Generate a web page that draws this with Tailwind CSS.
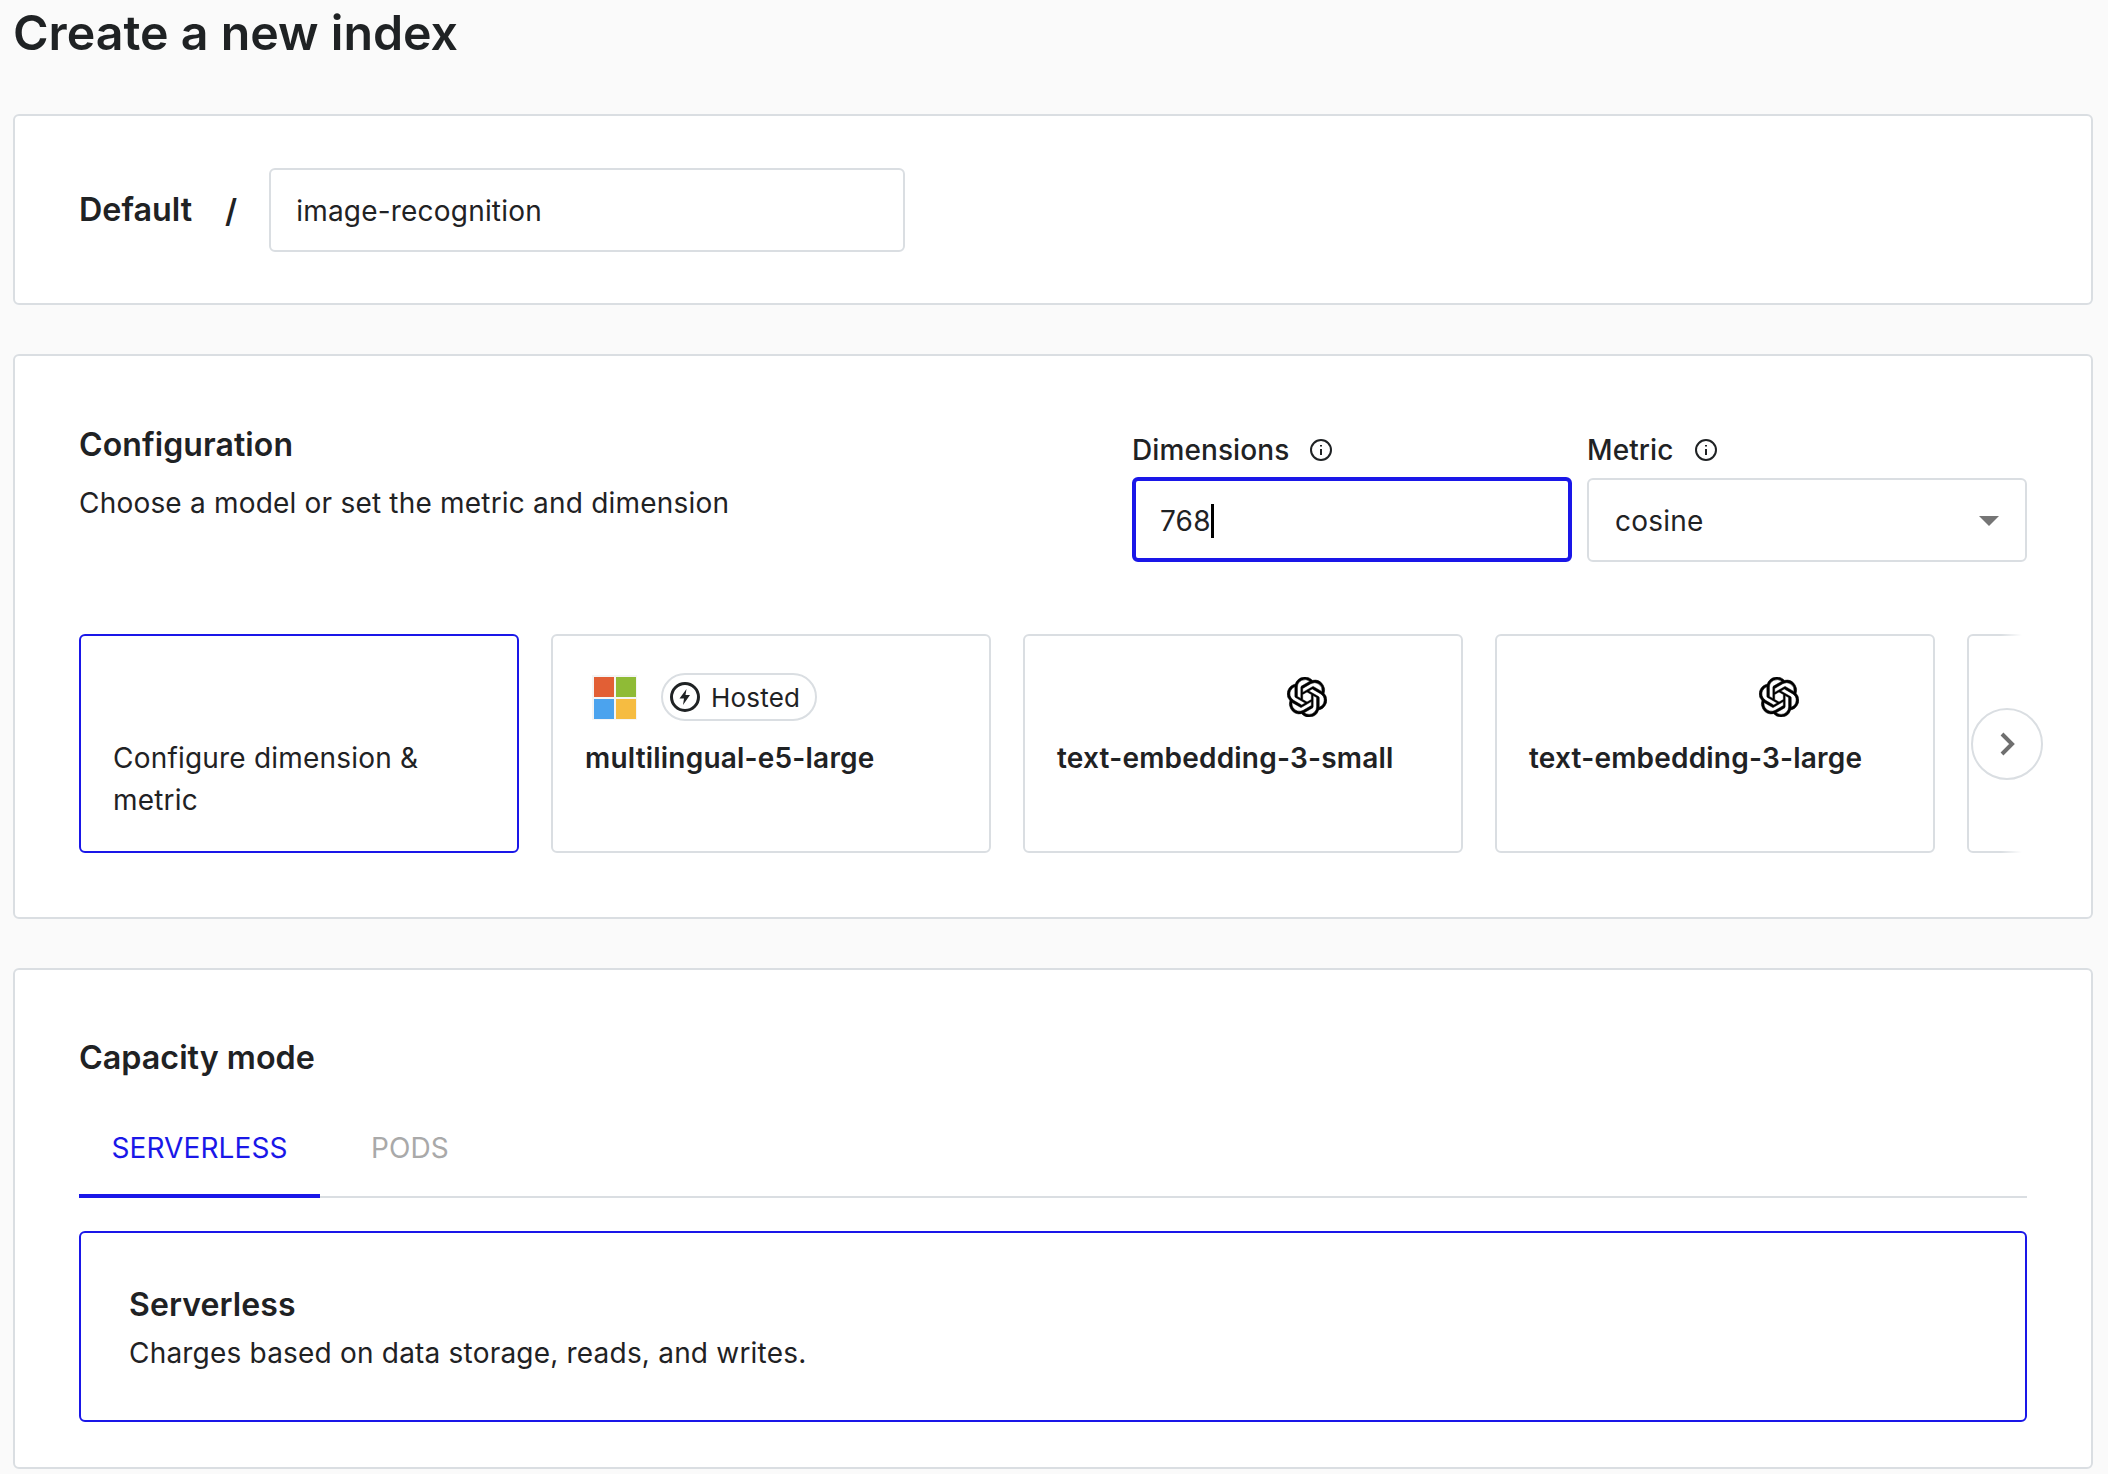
<!doctype html>
<html><head><meta charset="utf-8"><script src="https://cdn.jsdelivr.net/npm/@tailwindcss/browser@4"></script></head>
<body class="bg-[#fafafa] text-[#1f2224] font-['Inter',sans-serif] h-[1474px] overflow-hidden">
<div class="pl-[13px] pr-[15px]">
<h1 class="h-[114px] text-[48.3px] leading-[66px] font-semibold">Create a new index</h1>

<section class="h-[191px] bg-white border-2 border-[#dadee2] rounded-md flex items-center pl-[64px] mb-[49px]">
  <span class="text-[32.3px] font-semibold pt-[2px]">Default</span>
  <span class="text-[32px] font-semibold ml-[33px] mr-[32px] pt-[2px]">/</span>
  <div class="w-[636px] h-[84px] border-2 border-[#dadee2] rounded-md flex items-center pl-[25px] pt-[2px] text-[28px] tracking-[0.2px]">image-recognition</div>
</section>

<section class="h-[565px] bg-white border-2 border-[#dadee2] rounded-md pl-[64px] pr-[64px] flex flex-col mb-[49px]">
  <div class="flex h-[278px]">
    <div class="flex-1 pt-[69px]">
      <h2 class="text-[32px] tracking-[0.1px] leading-[40px] font-semibold">Configuration</h2>
      <p class="text-[28px] tracking-[0.2px] leading-[40px] mt-[18px]">Choose a model or set the metric and dimension</p>
    </div>
    <div class="w-[440px] pt-[74px] mr-[16px]">
      <div class="flex items-center gap-[20px] h-[40px] text-[28px] tracking-[0.1px] font-medium">Dimensions <svg class="w-[24px] h-[24px]" viewBox="0 0 24 24" fill="none" stroke="#1f2224" stroke-width="2"><circle cx="12" cy="12" r="10"/><path d="M12 11v6M12 7v1.500"/></svg></div>
      <div class="mt-[7px] h-[85px] border-[4px] border-[#1a17e8] rounded-md flex items-center pl-[24px] pt-[2px] text-[28px] tracking-[0.2px]">768<span class="w-[3px] h-[34px] bg-black inline-block"></span></div>
    </div>
    <div class="w-[440px] pt-[74px] -ml-[1px]">
      <div class="flex items-center gap-[20px] h-[40px] text-[28px] tracking-[0.1px] font-medium">Metric <svg class="w-[24px] h-[24px]" viewBox="0 0 24 24" fill="none" stroke="#1f2224" stroke-width="2"><circle cx="12" cy="12" r="10"/><path d="M12 11v6M12 7v1.500"/></svg></div>
      <div class="mt-[8px] h-[84px] border-2 border-[#dadee2] rounded-md flex items-center justify-between pl-[26px] pr-[26px] pt-[1px] text-[28px] tracking-[0.2px]">cosine <svg class="w-[20px] h-[10px]" viewBox="0 0 20 10"><path d="M0 0h20L10 10z" fill="#757575"/></svg></div>
    </div>
  </div>
  <div class="relative h-[219px] w-[1948px]">
  <div class="relative flex gap-[32px] overflow-hidden h-[219px]">
    <div class="w-[440px] shrink-0 border-2 border-[#1a17e8] rounded-md pl-[32px] pr-[32px] pt-[101px] text-[28px] tracking-[0.2px] leading-[42px]">Configure dimension &amp; metric</div>
    <div class="w-[440px] shrink-0 border-2 border-[#dadee2] rounded-md pl-[32px] pt-[37px]">
      <div class="flex items-center h-[48px] ml-[7px]">
        <svg class="w-[45px] h-[45px]" viewBox="0 0 45 45"><rect width="45" height="45" fill="#f5f5f5"/><rect x="2" y="2" width="20" height="20" fill="#e25f35"/><rect x="24" y="2" width="20" height="20" fill="#8fbb36"/><rect x="2" y="24" width="20" height="20" fill="#4ba3ee"/><rect x="24" y="24" width="20" height="20" fill="#f6bc41"/></svg>
        <div class="ml-[24px] h-[48px] w-[156px] border-2 border-[#dadee2] rounded-full flex items-center pl-[7px] gap-[11px] text-[26px] tracking-[0.2px]">
          <svg class="w-[30px] h-[30px]" viewBox="0 0 30 30"><circle cx="15" cy="15" r="13.5" fill="none" stroke="#1f2224" stroke-width="3"/><path d="M16.500 7 9.500 16.500H14L13 23l7-10h-4.500z" fill="#1f2224"/></svg>Hosted</div>
      </div>
      <div class="text-[28px] tracking-[0.2px] leading-[40px] font-semibold mt-[17px]">multilingual-e5-large</div>
    </div>
    <div class="w-[440px] shrink-0 border-2 border-[#dadee2] rounded-md pl-[32px] pt-[41px]">
      <svg class="w-[40px] h-[40px] ml-[230px]" viewBox="0 0 24 24" fill="#000" stroke="#000" stroke-width="0.3"><path d="M22.2819 9.8211a5.9847 5.9847 0 0 0-.5157-4.9108 6.0462 6.0462 0 0 0-6.5098-2.9A6.0651 6.0651 0 0 0 4.9807 4.1818a5.9847 5.9847 0 0 0-3.9977 2.9 6.0462 6.0462 0 0 0 .7427 7.0966 5.98 5.98 0 0 0 .511 4.9107 6.051 6.051 0 0 0 6.5146 2.9001A5.9847 5.9847 0 0 0 13.2599 24a6.0557 6.0557 0 0 0 5.7718-4.2058 5.9894 5.9894 0 0 0 3.9977-2.9001 6.0557 6.0557 0 0 0-.7475-7.0729zm-9.022 12.6081a4.4755 4.4755 0 0 1-2.8764-1.0408l.1419-.0804 4.7783-2.7582a.7948.7948 0 0 0 .3927-.6813v-6.7369l2.02 1.1686a.071.071 0 0 1 .038.052v5.5826a4.504 4.504 0 0 1-4.4945 4.4944zm-9.6607-4.1254a4.4708 4.4708 0 0 1-.5346-3.0137l.142.0852 4.783 2.7582a.7712.7712 0 0 0 .7806 0l5.8428-3.3685v2.3324a.0804.0804 0 0 1-.0332.0615L9.74 19.9502a4.4992 4.4992 0 0 1-6.1408-1.6464zM2.3408 7.8956a4.485 4.485 0 0 1 2.3655-1.9728V11.6a.7664.7664 0 0 0 .3879.6765l5.8144 3.3543-2.0201 1.1685a.0757.0757 0 0 1-.071 0l-4.8303-2.7865A4.504 4.504 0 0 1 2.3408 7.872zm16.5963 3.8558L13.1038 8.364 15.1192 7.2a.0757.0757 0 0 1 .071 0l4.8303 2.7913a4.4944 4.4944 0 0 1-.6765 8.1042v-5.6772a.79.79 0 0 0-.407-.667zm2.0107-3.0231l-.142-.0852-4.7735-2.7818a.7759.7759 0 0 0-.7854 0L9.409 9.2297V6.8974a.0662.0662 0 0 1 .0284-.0615l4.8303-2.7866a4.4992 4.4992 0 0 1 6.6802 4.66zM8.3065 12.863l-2.02-1.1638a.0804.0804 0 0 1-.038-.0567V6.0742a4.4992 4.4992 0 0 1 7.3757-3.4537l-.142.0805L8.704 5.459a.7948.7948 0 0 0-.3927.6813zm1.0976-2.3654l2.602-1.4998 2.6069 1.4998v2.9994l-2.5974 1.4997-2.6067-1.4997Z"/></svg>
      <div class="text-[28px] tracking-[0.2px] leading-[40px] font-semibold mt-[21px]">text-embedding-3-small</div>
    </div>
    <div class="w-[440px] shrink-0 border-2 border-[#dadee2] rounded-md pl-[32px] pt-[41px]">
      <svg class="w-[40px] h-[40px] ml-[230px]" viewBox="0 0 24 24" fill="#000" stroke="#000" stroke-width="0.3"><path d="M22.2819 9.8211a5.9847 5.9847 0 0 0-.5157-4.9108 6.0462 6.0462 0 0 0-6.5098-2.9A6.0651 6.0651 0 0 0 4.9807 4.1818a5.9847 5.9847 0 0 0-3.9977 2.9 6.0462 6.0462 0 0 0 .7427 7.0966 5.98 5.98 0 0 0 .511 4.9107 6.051 6.051 0 0 0 6.5146 2.9001A5.9847 5.9847 0 0 0 13.2599 24a6.0557 6.0557 0 0 0 5.7718-4.2058 5.9894 5.9894 0 0 0 3.9977-2.9001 6.0557 6.0557 0 0 0-.7475-7.0729zm-9.022 12.6081a4.4755 4.4755 0 0 1-2.8764-1.0408l.1419-.0804 4.7783-2.7582a.7948.7948 0 0 0 .3927-.6813v-6.7369l2.02 1.1686a.071.071 0 0 1 .038.052v5.5826a4.504 4.504 0 0 1-4.4945 4.4944zm-9.6607-4.1254a4.4708 4.4708 0 0 1-.5346-3.0137l.142.0852 4.783 2.7582a.7712.7712 0 0 0 .7806 0l5.8428-3.3685v2.3324a.0804.0804 0 0 1-.0332.0615L9.74 19.9502a4.4992 4.4992 0 0 1-6.1408-1.6464zM2.3408 7.8956a4.485 4.485 0 0 1 2.3655-1.9728V11.6a.7664.7664 0 0 0 .3879.6765l5.8144 3.3543-2.0201 1.1685a.0757.0757 0 0 1-.071 0l-4.8303-2.7865A4.504 4.504 0 0 1 2.3408 7.872zm16.5963 3.8558L13.1038 8.364 15.1192 7.2a.0757.0757 0 0 1 .071 0l4.8303 2.7913a4.4944 4.4944 0 0 1-.6765 8.1042v-5.6772a.79.79 0 0 0-.407-.667zm2.0107-3.0231l-.142-.0852-4.7735-2.7818a.7759.7759 0 0 0-.7854 0L9.409 9.2297V6.8974a.0662.0662 0 0 1 .0284-.0615l4.8303-2.7866a4.4992 4.4992 0 0 1 6.6802 4.66zM8.3065 12.863l-2.02-1.1638a.0804.0804 0 0 1-.038-.0567V6.0742a4.4992 4.4992 0 0 1 7.3757-3.4537l-.142.0805L8.704 5.459a.7948.7948 0 0 0-.3927.6813zm1.0976-2.3654l2.602-1.4998 2.6069 1.4998v2.9994l-2.5974 1.4997-2.6067-1.4997Z"/></svg>
      <div class="text-[28px] tracking-[0.2px] leading-[40px] font-semibold mt-[21px]">text-embedding-3-large</div>
    </div>
    <div class="w-[440px] shrink-0 border-2 border-[#dadee2] rounded-md"></div>
    <div class="absolute right-0 top-0 bottom-0 w-[26px] bg-gradient-to-r from-white/0 to-white to-[80%]"></div>
  </div>
  <div class="absolute left-[1892px] top-[74px] w-[72px] h-[72px] rounded-full border-2 border-[#dadee2] bg-white/60 flex items-center justify-center">
    <svg class="w-[16px] h-[24px] ml-[2px]" viewBox="0 0 16 24" fill="none" stroke="#6f6f6f" stroke-width="4"><path d="M2 2l10 10L2 22"/></svg>
  </div>
  </div>
</section>

<section class="h-[501px] bg-white border-2 border-[#dadee2] rounded-md pl-[64px] pr-[64px] pt-[68px]">
  <h2 class="text-[32.3px] leading-[40px] font-semibold">Capacity mode</h2>
  <div class="mt-[28px] flex h-[92px] border-b-2 border-[#dadee2] w-[1948px]">
    <div class="w-[241px] h-[92px] border-b-4 border-[#1a17e8] text-[#1a17e8] text-[28px] tracking-[0.1px] flex items-center justify-center pb-[4px]">SERVERLESS</div>
    <div class="ml-[51px] text-[#a9a9a9] text-[28px] tracking-[0.1px] flex items-center h-[92px] pb-[8px]">PODS</div>
  </div>
  <div class="mt-[33px] h-[191px] w-[1948px] border-2 border-[#1a17e8] rounded-md pl-[48px] pt-[52px]">
    <h3 class="text-[32px] tracking-[0.1px] leading-[40px] font-semibold">Serverless</h3>
    <p class="text-[28px] tracking-[0.2px] leading-[40px] mt-[8px]">Charges based on data storage, reads, and writes.</p>
  </div>
</section>
</div>
</body></html>
